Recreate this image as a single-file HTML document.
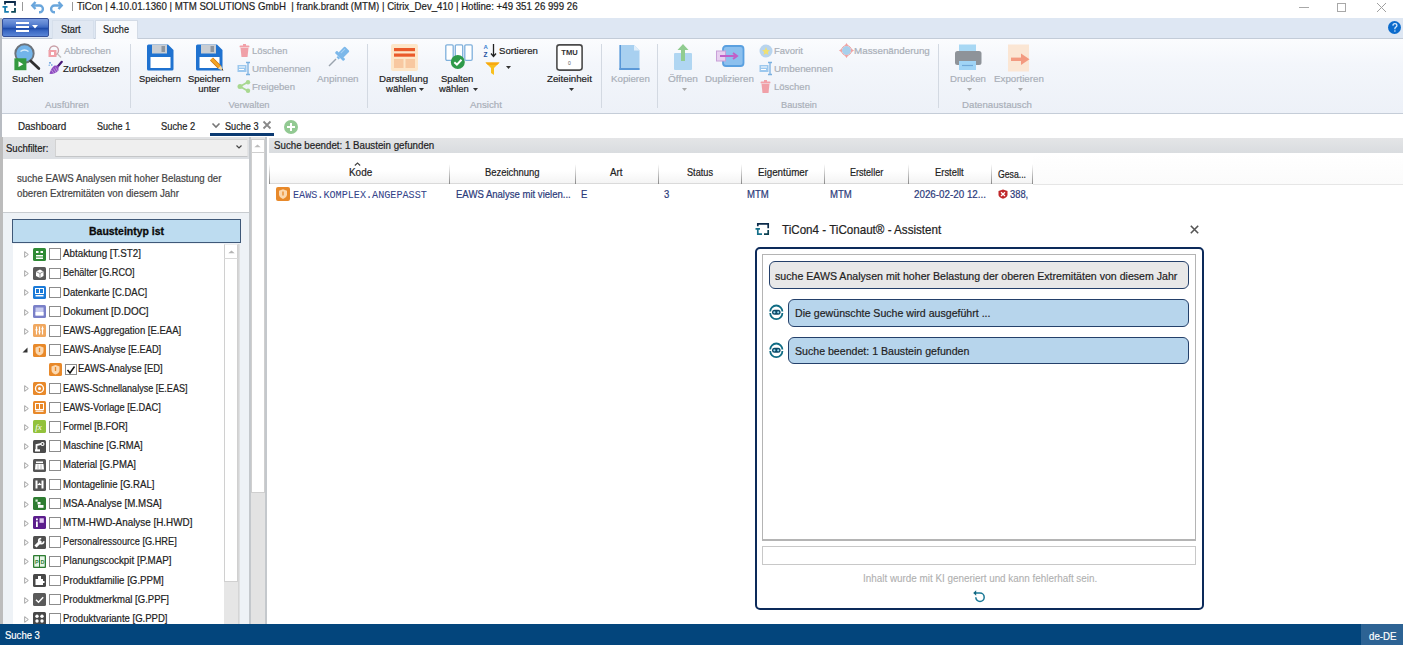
<!DOCTYPE html>
<html><head><meta charset="utf-8">
<style>
*{margin:0;padding:0;box-sizing:border-box}
html,body{width:1403px;height:645px;overflow:hidden;background:#fff;font-family:"Liberation Sans",sans-serif;color:#222;font-size:10px}
.a{position:absolute}
.t{position:absolute;white-space:nowrap;line-height:1}
svg{position:absolute;overflow:visible}
</style></head><body>

<!-- TITLE BAR -->
<div class="a" style="left:0;top:0;width:1403px;height:18px;background:#fff"></div>
<svg style="left:0px;top:0px" width="18" height="14" viewBox="0 0 18 14">
<path d="M5 4.5V2H15V5.8" fill="none" stroke="#0b2a4a" stroke-width="1.8"/>
<path d="M2.5 6.8H7.5M5.1 6V11.9H8.8" fill="none" stroke="#1a7eb0" stroke-width="1.8"/>
<path d="M11.2 11.9H15V8" fill="none" stroke="#0b4858" stroke-width="1.8"/>
</svg>
<div class="a" style="left:21.5px;top:1.5px;width:1.5px;height:9px;background:#999"></div>
<svg style="left:30px;top:0px" width="16" height="14" viewBox="0 0 16 14"><path d="M5.5 2L2.3 5.5L5.5 9" fill="none" stroke="#6aa6dc" stroke-width="2.4"/><path d="M2.8 5.5H9.5A3.4 3.4 0 0 1 9.5 12.3H9" fill="none" stroke="#6aa6dc" stroke-width="2.4"/></svg>
<svg style="left:48px;top:0px" width="16" height="14" viewBox="0 0 16 14"><path d="M10.5 2L13.7 5.5L10.5 9" fill="none" stroke="#6aa6dc" stroke-width="2.4"/><path d="M13.2 5.5H6.5A3.4 3.4 0 0 0 6.5 12.3H7" fill="none" stroke="#6aa6dc" stroke-width="2.4"/></svg>
<div class="a" style="left:71.7px;top:2px;width:1.3px;height:8.5px;background:#999"></div>
<div class="a" style="left:1299px;top:7px;width:10px;height:1px;background:#a8a8a8"></div>
<div class="a" style="left:1337px;top:3px;width:9px;height:9px;border:1px solid #a8a8a8"></div>
<svg style="left:1377px;top:3px" width="9" height="9" viewBox="0 0 9 9"><path d="M0 0L9 9M9 0L0 9" stroke="#a0a0a0" stroke-width="1"/></svg>

<!-- RIBBON TAB BAR -->
<div class="a" style="left:0;top:18px;width:1403px;height:21px;background:#dee7f3;border-bottom:1px solid #c3ccd8"></div>
<div class="a" style="left:2px;top:18px;width:47px;height:19px;background:linear-gradient(#7a9ce0,#5a82d0 30%,#3e6ac4 48%,#1d4aa8 55%,#3a68c4 70%,#5a86d6);border:1px solid #34509a;border-radius:2px"></div>
<div class="a" style="left:16px;top:22px;width:13px;height:2px;background:#fff"></div>
<div class="a" style="left:16px;top:26px;width:13px;height:2px;background:#fff"></div>
<div class="a" style="left:16px;top:30px;width:13px;height:2px;background:#fff"></div>
<svg style="left:32px;top:25px" width="6" height="4" viewBox="0 0 6 4"><path d="M0 0H6L3 3.5Z" fill="#fff"/></svg>
<div class="a" style="left:52px;top:19.5px;width:42px;height:19px;background:#e1e8f2;border:1px solid #d6dfeb;border-bottom:none"></div>
<div class="a" style="left:95px;top:19.5px;width:43px;height:20px;background:#f8fafd;border:1px solid #d3dbe6;border-bottom:none;border-radius:1px 1px 0 0"></div>
<div class="a" style="left:1388.2px;top:21.2px;width:13.2px;height:13px;border-radius:50%;background:#0b6bcc"></div>
<svg style="left:1388px;top:21px" width="14" height="13" viewBox="0 0 14 13"><path d="M4.9 4.6Q5 2.6 6.9 2.6Q8.9 2.6 8.9 4.4Q8.9 5.6 7.6 6.2Q6.9 6.6 6.9 7.8V8.2" fill="none" stroke="#d8ecff" stroke-width="1.3"/><circle cx="6.9" cy="10" r="0.8" fill="#d8ecff"/></svg>

<!-- RIBBON BODY -->
<div class="a" style="left:0;top:39px;width:1403px;height:75px;background:linear-gradient(#fbfcfe,#f3f6fb 35%,#edf1f8);border-bottom:1px solid #c5cdd8"></div>
<div class="a" style="left:0;top:18px;width:2px;height:96px;background:#b8bcc2"></div>

<div class="a" style="left:130px;top:44px;width:1px;height:64px;background:#d3d9e2"></div>
<div class="a" style="left:367px;top:44px;width:1px;height:64px;background:#d3d9e2"></div>
<div class="a" style="left:601px;top:44px;width:1px;height:64px;background:#d3d9e2"></div>
<div class="a" style="left:657px;top:44px;width:1px;height:64px;background:#d3d9e2"></div>
<div class="a" style="left:938px;top:44px;width:1px;height:64px;background:#d3d9e2"></div>
<div class="t" style="left:-233px;width:600px;text-align:center;top:100.12px;font-size:9.90px;color:#a9afb8;transform:scaleX(0.9750);transform-origin:50% 0;-webkit-text-stroke:0.2px #a9afb8;">Ausführen</div>
<div class="t" style="left:-50.599999999999994px;width:600px;text-align:center;top:100.12px;font-size:9.90px;color:#a9afb8;transform:scaleX(0.9476);transform-origin:50% 0;-webkit-text-stroke:0.2px #a9afb8;">Verwalten</div>
<div class="t" style="left:186px;width:600px;text-align:center;top:100.12px;font-size:9.90px;color:#a9afb8;transform:scaleX(0.9857);transform-origin:50% 0;-webkit-text-stroke:0.2px #a9afb8;">Ansicht</div>
<div class="t" style="left:499px;width:600px;text-align:center;top:100.12px;font-size:9.90px;color:#a9afb8;transform:scaleX(0.9344);transform-origin:50% 0;-webkit-text-stroke:0.2px #a9afb8;">Baustein</div>
<div class="t" style="left:697px;width:600px;text-align:center;top:100.12px;font-size:9.90px;color:#a9afb8;transform:scaleX(0.9784);transform-origin:50% 0;-webkit-text-stroke:0.2px #a9afb8;">Datenaustausch</div>
<svg style="left:13px;top:43px" width="28" height="28" viewBox="0 0 28 28">
<circle cx="11.5" cy="10.5" r="9.2" fill="#72b4ea" stroke="#6c737b" stroke-width="1.9"/>
<path d="M7.5 8.5Q11.5 5.5 15.5 8.5" fill="none" stroke="#d8ecfa" stroke-width="1.5"/>
<path d="M17.8 18L25.8 25.6" stroke="#2f2f2f" stroke-width="2.8" stroke-linecap="round"/>
<rect x="1.4" y="15.3" width="12" height="11.9" fill="#33993f"/>
<path d="M5.5 18.3L10.3 21.2L5.5 24.1Z" fill="#fff"/></svg>
<div class="t" style="left:11.7px;top:73.92px;font-size:9.90px;color:#1e1e1e;transform:scaleX(0.9352);transform-origin:0 0;-webkit-text-stroke:0.2px #1e1e1e;">Suchen</div>
<svg style="left:48px;top:45px" width="14" height="13" viewBox="0 0 14 13"><circle cx="6" cy="5.5" r="4.5" fill="none" stroke="#c9a0a8" stroke-width="1.4"/>
<rect x="0.5" y="5" width="8" height="7" fill="#f0a0a8"/><rect x="3" y="7" width="3" height="3" fill="#fff"/>
<path d="M9.5 9L13 12.5" stroke="#c0c0c0" stroke-width="1.4"/></svg>
<div class="t" style="left:63.6px;top:46.02px;font-size:9.90px;color:#a9afb8;transform:scaleX(0.9815);transform-origin:0 0;-webkit-text-stroke:0.2px #a9afb8;">Abbrechen</div>
<svg style="left:48px;top:61px" width="15" height="14" viewBox="0 0 15 14"><path d="M13.8 0.8L9.5 5.8" stroke="#4a1a78" stroke-width="2.2" stroke-linecap="round"/><path d="M10.5 4.8L6.5 4.5Q3 7 1.5 12.8Q6.5 13.5 10.5 9.5Z" fill="#8e4cc0"/><path d="M3.5 9L6 12.5M5.5 7.5L8 11.5M7.5 6.5L9.5 10" stroke="#c49ae0" stroke-width="0.9"/><circle cx="2" cy="1.8" r="0.9" fill="#4a90d8"/><circle cx="3.8" cy="4" r="0.8" fill="#4a90d8"/><circle cx="1.2" cy="4.2" r="0.6" fill="#4a90d8"/></svg>
<div class="t" style="left:63.2px;top:64.22px;font-size:9.90px;color:#1e1e1e;transform:scaleX(0.9558);transform-origin:0 0;-webkit-text-stroke:0.2px #1e1e1e;">Zurücksetzen</div>
<svg style="left:147px;top:44px" width="28" height="28" viewBox="0 0 28 28"><path d="M1.5 0.5H21L26.5 6V25A1.5 1.5 0 0 1 25 26.5H1.5A1.5 1.5 0 0 1 0 25V2A1.5 1.5 0 0 1 1.5 0.5Z" fill="#1f72d0"/>
<rect x="5" y="0.5" width="15" height="9" fill="#c8cdd3"/><rect x="14.5" y="2" width="3.5" height="6" fill="#8e959e"/>
<rect x="3.5" y="13" width="20" height="11" fill="#fff"/></svg>
<div class="t" style="left:139px;top:74.02px;font-size:9.90px;color:#1e1e1e;transform:scaleX(0.9421);transform-origin:0 0;-webkit-text-stroke:0.2px #1e1e1e;">Speichern</div>
<svg style="left:196px;top:44px" width="28" height="28" viewBox="0 0 28 28"><path d="M1.5 0.5H21L26.5 6V25A1.5 1.5 0 0 1 25 26.5H1.5A1.5 1.5 0 0 1 0 25V2A1.5 1.5 0 0 1 1.5 0.5Z" fill="#1f72d0"/>
<rect x="5" y="0.5" width="15" height="9" fill="#c8cdd3"/><rect x="14.5" y="2" width="3.5" height="6" fill="#8e959e"/>
<rect x="3.5" y="13" width="20" height="11" fill="#fff"/><path d="M15.5 15L23.5 23" stroke="#c87010" stroke-width="4.2" stroke-linecap="butt"/><path d="M15.5 15L23.5 23" stroke="#f5a524" stroke-width="3" stroke-linecap="butt"/><path d="M22 24.5L25 21.5L27.3 27Z" fill="#f8d8a0"/><path d="M25.5 25.5L27.3 27L26.6 24.6Z" fill="#333"/></svg>
<div class="t" style="left:187.5px;top:74.02px;font-size:9.90px;color:#1e1e1e;transform:scaleX(0.9534);transform-origin:0 0;-webkit-text-stroke:0.2px #1e1e1e;">Speichern</div>
<div class="t" style="left:-91.19999999999999px;width:600px;text-align:center;top:83.82px;font-size:9.90px;color:#1e1e1e;transform:scaleX(0.9528);transform-origin:50% 0;-webkit-text-stroke:0.2px #1e1e1e;">unter</div>
<svg style="left:239px;top:44px" width="12" height="14" viewBox="0 0 12 14"><rect x="0.5" y="1.5" width="10" height="2" rx="1" fill="#f2a0a8"/><rect x="4" y="0" width="3" height="2" fill="#f2a0a8"/><path d="M1.5 4H9.5L8.5 13H2.5Z" fill="#f0a0a8"/></svg>
<div class="t" style="left:251.6px;top:45.82px;font-size:9.90px;color:#a9afb8;transform:scaleX(0.9484);transform-origin:0 0;-webkit-text-stroke:0.2px #a9afb8;">Löschen</div>
<svg style="left:237px;top:62px" width="15" height="13" viewBox="0 0 15 13"><rect x="0.5" y="3" width="9" height="7" fill="#9cc8ee"/><path d="M2 5H8M2 7.5H7" stroke="#fff" stroke-width="1"/><path d="M11 0.5V12.5M9 0.5H13M9 12.5H13" stroke="#7ab0e0" stroke-width="1.3"/></svg>
<div class="t" style="left:251.9px;top:64.02px;font-size:9.90px;color:#a9afb8;transform:scaleX(0.9908);transform-origin:0 0;-webkit-text-stroke:0.2px #a9afb8;">Umbenennen</div>
<svg style="left:237px;top:80px" width="14" height="13" viewBox="0 0 14 13"><path d="M3 6.5L11 2M3 6.5L11 11" stroke="#a8d890" stroke-width="1.8"/><circle cx="3" cy="6.5" r="2.5" fill="#a8d890"/><circle cx="11" cy="2.2" r="2.2" fill="#a8d890"/><circle cx="11" cy="10.8" r="2.2" fill="#a8d890"/></svg>
<div class="t" style="left:251.9px;top:82.32px;font-size:9.90px;color:#a9afb8;transform:scaleX(0.9668);transform-origin:0 0;-webkit-text-stroke:0.2px #a9afb8;">Freigeben</div>
<svg style="left:328px;top:46px" width="22" height="21" viewBox="0 0 22 21"><path d="M1 20L8 13" stroke="#9aa3ad" stroke-width="1.4"/><g transform="rotate(45 13.5 8.5)"><rect x="10" y="0.5" width="7" height="9" rx="1" fill="#7cb8ea"/><rect x="7.5" y="9" width="12" height="3" rx="1" fill="#7cb8ea"/><rect x="12" y="12" width="3" height="2" fill="#7cb8ea"/><path d="M12 2V8" stroke="#a8d2f4" stroke-width="1"/></g></svg>
<div class="t" style="left:317.3px;top:74.02px;font-size:9.90px;color:#a9afb8;transform:scaleX(0.9967);transform-origin:0 0;-webkit-text-stroke:0.2px #a9afb8;">Anpinnen</div>
<svg style="left:391px;top:44px" width="27" height="27" viewBox="0 0 27 27"><rect x="0" y="0" width="27" height="27" rx="2" fill="#fde6c8"/><rect x="3" y="4" width="21" height="3.2" fill="#ea5a2a"/><rect x="3" y="9.5" width="21" height="3.2" fill="#ea5a2a"/><rect x="3" y="15" width="9.5" height="9" fill="#f8c8a0"/><rect x="14.5" y="15" width="9.5" height="9" fill="#f8c8a0"/></svg>
<div class="t" style="left:379px;top:73.92px;font-size:9.90px;color:#1e1e1e;transform:scaleX(0.9825);transform-origin:0 0;-webkit-text-stroke:0.2px #1e1e1e;">Darstellung</div>
<div class="t" style="left:385.8px;top:83.82px;font-size:9.90px;color:#1e1e1e;transform:scaleX(0.9690);transform-origin:0 0;-webkit-text-stroke:0.2px #1e1e1e;">wählen</div>
<svg style="left:419px;top:88px" width="5" height="3" viewBox="0 0 5 3"><path d="M0 0H5L2.5 3Z" fill="#333"/></svg>
<svg style="left:445px;top:44px" width="28" height="28" viewBox="0 0 28 28"><rect x="0.8" y="0.8" width="7.4" height="15.5" rx="1.2" fill="#fff" stroke="#7fb0dc" stroke-width="1.3"/><rect x="10.3" y="0.8" width="7.4" height="15.5" rx="1.2" fill="#fff" stroke="#7fb0dc" stroke-width="1.3"/><rect x="19.8" y="0.8" width="7.4" height="15.5" rx="1.2" fill="#fff" stroke="#7fb0dc" stroke-width="1.3"/><circle cx="12.8" cy="18" r="7" fill="#2e9a4a"/><path d="M9.3 18.2L11.9 20.6L16.5 15.8" fill="none" stroke="#fff" stroke-width="2"/></svg>
<div class="t" style="left:440.6px;top:73.92px;font-size:9.90px;color:#1e1e1e;transform:scaleX(0.9649);transform-origin:0 0;-webkit-text-stroke:0.2px #1e1e1e;">Spalten</div>
<div class="t" style="left:439.3px;top:83.82px;font-size:9.90px;color:#1e1e1e;transform:scaleX(0.9531);transform-origin:0 0;-webkit-text-stroke:0.2px #1e1e1e;">wählen</div>
<svg style="left:473px;top:88px" width="5" height="3" viewBox="0 0 5 3"><path d="M0 0H5L2.5 3Z" fill="#333"/></svg>
<svg style="left:483px;top:43px" width="15" height="15" viewBox="0 0 15 15"><text x="0.5" y="6" font-size="6" font-family="Liberation Sans" fill="#3a80d0" font-weight="bold">A</text><text x="0.5" y="13.5" font-size="6.5" font-family="Liberation Sans" fill="#1a50a0" font-weight="bold">Z</text><path d="M10.5 1V13M8 10.5L10.5 13.5L13 10.5" fill="none" stroke="#222" stroke-width="1.3"/></svg>
<div class="t" style="left:499px;top:46.02px;font-size:9.90px;color:#1e1e1e;transform:scaleX(0.9709);transform-origin:0 0;-webkit-text-stroke:0.2px #1e1e1e;">Sortieren</div>
<svg style="left:485px;top:62px" width="15" height="14" viewBox="0 0 15 14"><path d="M0.5 0.5H14.5L9 6V13L6 11V6Z" fill="#f8c020"/><path d="M0.5 0.5H14.5L12 3H3Z" fill="#f8a810"/></svg>
<svg style="left:506px;top:66px" width="5" height="3" viewBox="0 0 5 3"><path d="M0 0H5L2.5 3Z" fill="#333"/></svg>
<svg style="left:556px;top:44px" width="27" height="27" viewBox="0 0 27 27"><rect x="0.9" y="0.9" width="25.2" height="25.2" rx="2.5" fill="#fff" stroke="#4a4a4a" stroke-width="1.6"/><text x="13.5" y="10.8" text-anchor="middle" font-size="7.6" font-weight="bold" font-family="Liberation Sans" fill="#333">TMU</text><text x="13.5" y="20.5" text-anchor="middle" font-size="5" font-family="Liberation Sans" fill="#555">0</text></svg>
<div class="t" style="left:547px;top:74.02px;font-size:9.90px;color:#1e1e1e;transform:scaleX(0.9852);transform-origin:0 0;-webkit-text-stroke:0.2px #1e1e1e;">Zeiteinheit</div>
<svg style="left:569px;top:88px" width="5" height="3" viewBox="0 0 5 3"><path d="M0 0H5L2.5 3Z" fill="#333"/></svg>
<svg style="left:619px;top:44px" width="21" height="27" viewBox="0 0 21 27"><path d="M0.5 1H15L20.5 6.5V26H0.5Z" fill="#a8d0f0"/><path d="M15 1V6.5H20.5Z" fill="#e0eefa"/><rect x="0.5" y="24" width="20" height="2" fill="#5a98d8"/><rect x="0.5" y="1" width="1.5" height="25" fill="#5a98d8"/></svg>
<div class="t" style="left:611px;top:74.02px;font-size:9.90px;color:#a9afb8;transform:scaleX(0.9841);transform-origin:0 0;-webkit-text-stroke:0.2px #a9afb8;">Kopieren</div>
<svg style="left:673px;top:44px" width="20" height="27" viewBox="0 0 20 27"><rect x="1" y="9" width="18" height="17" rx="1" fill="#b0d6f2"/><path d="M10 0L15.5 6H12V17H8V6H4.5Z" fill="#90cc90"/></svg>
<div class="t" style="left:668px;top:74.02px;font-size:9.90px;color:#a9afb8;transform:scaleX(1.0156);transform-origin:0 0;-webkit-text-stroke:0.2px #a9afb8;">Öffnen</div>
<svg style="left:682px;top:88px" width="5" height="3" viewBox="0 0 5 3"><path d="M0 0H5L2.5 3Z" fill="#aaa"/></svg>
<svg style="left:716px;top:45px" width="29" height="23" viewBox="0 0 29 23"><rect x="7" y="1" width="20.5" height="20" rx="3" fill="#8cc0ee" stroke="#5aa0e0" stroke-width="1.8"/><rect x="0.5" y="6" width="9" height="10" fill="#e8d0f0" stroke="#c8a0d8"/><path d="M4 11H20M17 8L21 11L17 14" stroke="#c060c8" stroke-width="2" fill="none"/></svg>
<div class="t" style="left:705px;top:74.02px;font-size:9.90px;color:#a9afb8;transform:scaleX(0.9894);transform-origin:0 0;-webkit-text-stroke:0.2px #a9afb8;">Duplizieren</div>
<svg style="left:759px;top:44px" width="14" height="14" viewBox="0 0 14 14"><circle cx="7" cy="7" r="6.5" fill="#b8d4ee"/><path d="M7 3L8.2 6L11 6.3L8.8 8L9.5 11L7 9.5L4.5 11L5.2 8L3 6.3L5.8 6Z" fill="#f0e070"/></svg>
<div class="t" style="left:774px;top:46.02px;font-size:9.90px;color:#a9afb8;transform:scaleX(0.9585);transform-origin:0 0;-webkit-text-stroke:0.2px #a9afb8;">Favorit</div>
<svg style="left:759px;top:62px" width="15" height="13" viewBox="0 0 15 13"><rect x="0.5" y="3" width="9" height="7" fill="#9cc8ee"/><path d="M2 5H8M2 7.5H7" stroke="#fff" stroke-width="1"/><path d="M11 0.5V12.5M9 0.5H13M9 12.5H13" stroke="#7ab0e0" stroke-width="1.3"/></svg>
<div class="t" style="left:774px;top:64.02px;font-size:9.90px;color:#a9afb8;transform:scaleX(0.9925);transform-origin:0 0;-webkit-text-stroke:0.2px #a9afb8;">Umbenennen</div>
<svg style="left:760px;top:80px" width="12" height="14" viewBox="0 0 12 14"><rect x="0.5" y="1.5" width="10" height="2" rx="1" fill="#f2a0a8"/><rect x="4" y="0" width="3" height="2" fill="#f2a0a8"/><path d="M1.5 4H9.5L8.5 13H2.5Z" fill="#f0a0a8"/></svg>
<div class="t" style="left:774px;top:82.32px;font-size:9.90px;color:#a9afb8;transform:scaleX(0.9618);transform-origin:0 0;-webkit-text-stroke:0.2px #a9afb8;">Löschen</div>
<svg style="left:839px;top:43px" width="15" height="15" viewBox="0 0 15 15"><circle cx="7.5" cy="7.5" r="4.5" fill="#a8d0ec"/><path d="M7.5 0L9.5 3H5.5ZM7.5 15L9.5 12H5.5ZM0 7.5L3 5.5V9.5ZM15 7.5L12 5.5V9.5Z" fill="#f0a0a0"/><circle cx="7.5" cy="7.5" r="5" fill="none" stroke="#f0a8a8" stroke-width="1"/></svg>
<div class="t" style="left:854px;top:46.02px;font-size:9.90px;color:#a9afb8;transform:scaleX(0.9934);transform-origin:0 0;-webkit-text-stroke:0.2px #a9afb8;">Massenänderung</div>
<svg style="left:954px;top:44px" width="29" height="27" viewBox="0 0 29 27"><rect x="5" y="0.5" width="17" height="7" fill="#a8d8f4"/><rect x="1" y="7" width="26.5" height="14" rx="2.5" fill="#8e9399"/><rect x="5" y="17" width="17" height="9" fill="#a0d4f6"/><path d="M8 21.5H19" stroke="#70a8d8" stroke-width="1.2"/></svg>
<div class="t" style="left:950px;top:74.02px;font-size:9.90px;color:#a9afb8;transform:scaleX(0.9766);transform-origin:0 0;-webkit-text-stroke:0.2px #a9afb8;">Drucken</div>
<svg style="left:967px;top:88px" width="5" height="3" viewBox="0 0 5 3"><path d="M0 0H5L2.5 3Z" fill="#aaa"/></svg>
<svg style="left:1007px;top:44px" width="24" height="28" viewBox="0 0 24 28"><rect x="1" y="0.5" width="21" height="27" fill="#fbe6d4"/><path d="M4 15.3H15" stroke="#f39a80" stroke-width="3.4"/><path d="M14 9.5L22.5 15.3L14 21Z" fill="#f39a80"/></svg>
<div class="t" style="left:994px;top:74.02px;font-size:9.90px;color:#a9afb8;transform:scaleX(0.9876);transform-origin:0 0;-webkit-text-stroke:0.2px #a9afb8;">Exportieren</div>
<svg style="left:1018px;top:88px" width="5" height="3" viewBox="0 0 5 3"><path d="M0 0H5L2.5 3Z" fill="#aaa"/></svg>


<!-- DOC TABS -->
<div class="a" style="left:0;top:114px;width:1403px;height:23px;background:#fff"></div>
<div class="a" style="left:0;top:114px;width:2px;height:23px;background:#b8bcc2"></div>
<svg style="left:212px;top:123px" width="8" height="5" viewBox="0 0 8 5"><path d="M0.5 0.5L4 4L7.5 0.5" fill="none" stroke="#777" stroke-width="1.6"/></svg>
<svg style="left:263px;top:121px" width="8" height="8" viewBox="0 0 8 8"><path d="M0.5 0.5L7.5 7.5M7.5 0.5L0.5 7.5" stroke="#888" stroke-width="1.8"/></svg>
<div class="a" style="left:210px;top:133px;width:64px;height:3px;background:#0b3a72"></div>
<div class="a" style="left:284px;top:120px;width:14px;height:14px;border-radius:50%;background:#92c992"></div>
<div class="a" style="left:289.8px;top:122.8px;width:2.4px;height:8.4px;background:#fff"></div>
<div class="a" style="left:286.8px;top:125.8px;width:8.4px;height:2.4px;background:#fff"></div>

<!-- LEFT PANEL -->
<div class="a" style="left:0;top:137px;width:268px;height:487px;background:#eef2f6"></div>
<div class="a" style="left:0;top:137px;width:3px;height:487px;background:#bcbcbc"></div>
<div class="a" style="left:3px;top:137px;width:247px;height:22px;background:linear-gradient(#e0e1e3,#dde0e4)"></div>
<div class="a" style="left:55px;top:139px;width:193px;height:17.5px;background:#efefef;border:1px solid #d2d2d2;border-right-color:#e4e4e4;border-bottom-color:#c4c6c8"></div>
<svg style="left:236px;top:145px" width="6" height="4" viewBox="0 0 6 4"><path d="M0.5 0.5L3 3L5.5 0.5" fill="none" stroke="#444" stroke-width="1.2"/></svg>
<div class="a" style="left:3px;top:159px;width:246px;height:54px;background:#fff;border-bottom:1.5px solid #c8ccd0"></div>

<div class="a" style="left:12px;top:219px;width:229px;height:23.8px;background:#bddcf0;border:1.3px solid #3f5878"></div>
<div class="a" style="left:13px;top:243.5px;width:227px;height:381px;background:#fff"></div>
<div class="a" style="left:238px;top:243.5px;width:2px;height:381px;background:linear-gradient(90deg,#d0d0d0,#e4e6e8)"></div>
<!-- inner scrollbar -->
<div class="a" style="left:224px;top:243.5px;width:14px;height:381px;background:#e6e6e6"></div>
<div class="a" style="left:224.2px;top:244px;width:14px;height:338px;background:#fff;border:1px solid #d0d0d0;border-top-color:#eee"></div>
<svg style="left:228px;top:250px" width="7" height="4" viewBox="0 0 7 4"><path d="M0.3 3.3L3.5 0.6L6.7 3.3Z" fill="#b4b4b4"/></svg>
<div class="a" style="left:224px;top:258px;width:14px;height:1px;background:#d8d8d8"></div>

<svg style="left:23.5px;top:251.0px" width="5" height="7" viewBox="0 0 5 7"><path d="M0.7 0.7L4.3 3.5L0.7 6.3Z" fill="none" stroke="#999" stroke-width="0.9"/></svg>
<svg style="left:32.6px;top:247.6px" width="13" height="13" viewBox="0 0 13 13"><rect width="13" height="13" rx="1.5" fill="#2f8a35"/><rect x="3" y="3" width="2.5" height="2" fill="#fff"/><rect x="7.5" y="3" width="2.5" height="2" fill="#fff"/><rect x="3" y="7" width="7" height="1.5" fill="#fff"/><rect x="3" y="9.5" width="7" height="1.5" fill="#fff"/></svg>
<div class="a" style="left:49px;top:248.3px;width:11.5px;height:11.5px;background:#fff;border:1px solid #8c8c8c"></div>
<div class="t" style="left:62.8px;top:249.10px;font-size:10.40px;color:#222;transform:scaleX(0.9435);transform-origin:0 0;-webkit-text-stroke:0.2px #222;">Abtaktung [T.ST2]</div>
<svg style="left:23.5px;top:270.2px" width="5" height="7" viewBox="0 0 5 7"><path d="M0.7 0.7L4.3 3.5L0.7 6.3Z" fill="none" stroke="#999" stroke-width="0.9"/></svg>
<svg style="left:32.6px;top:266.8px" width="13" height="13" viewBox="0 0 13 13"><rect width="13" height="13" rx="1.5" fill="#5a5a5a"/><path d="M3 4.5L7 2.5L10.5 4.5V9L7 11L3 9Z" fill="#fff"/><path d="M3 4.5L7 6.5L10.5 4.5M7 6.5V11" stroke="#777" stroke-width="0.8" fill="none"/></svg>
<div class="a" style="left:49px;top:267.5px;width:11.5px;height:11.5px;background:#fff;border:1px solid #8c8c8c"></div>
<div class="t" style="left:62.8px;top:268.30px;font-size:10.40px;color:#222;transform:scaleX(0.8798);transform-origin:0 0;-webkit-text-stroke:0.2px #222;">Behälter [G.RCO]</div>
<svg style="left:23.5px;top:289.4px" width="5" height="7" viewBox="0 0 5 7"><path d="M0.7 0.7L4.3 3.5L0.7 6.3Z" fill="none" stroke="#999" stroke-width="0.9"/></svg>
<svg style="left:32.6px;top:286.0px" width="13" height="13" viewBox="0 0 13 13"><rect width="13" height="13" rx="1.5" fill="#1a7ad8"/><rect x="2.5" y="2.5" width="8" height="5" fill="none" stroke="#fff" stroke-width="1"/><path d="M6.5 2.5V7.5" stroke="#fff"/><rect x="2.5" y="9" width="8" height="1.5" fill="#fff"/></svg>
<div class="a" style="left:49px;top:286.7px;width:11.5px;height:11.5px;background:#fff;border:1px solid #8c8c8c"></div>
<div class="t" style="left:62.8px;top:287.50px;font-size:10.40px;color:#222;transform:scaleX(0.9173);transform-origin:0 0;-webkit-text-stroke:0.2px #222;">Datenkarte [C.DAC]</div>
<svg style="left:23.5px;top:308.6px" width="5" height="7" viewBox="0 0 5 7"><path d="M0.7 0.7L4.3 3.5L0.7 6.3Z" fill="none" stroke="#999" stroke-width="0.9"/></svg>
<svg style="left:32.6px;top:305.20000000000005px" width="13" height="13" viewBox="0 0 13 13"><rect width="13" height="13" rx="1.5" fill="#7a80c8"/><rect x="2.5" y="2.5" width="8" height="8" fill="#c8ccf0"/><rect x="2.5" y="7" width="8" height="3.5" fill="#fff"/></svg>
<div class="a" style="left:49px;top:305.90000000000003px;width:11.5px;height:11.5px;background:#fff;border:1px solid #8c8c8c"></div>
<div class="t" style="left:62.8px;top:306.70px;font-size:10.40px;color:#222;transform:scaleX(0.9567);transform-origin:0 0;-webkit-text-stroke:0.2px #222;">Dokument [D.DOC]</div>
<svg style="left:23.5px;top:327.8px" width="5" height="7" viewBox="0 0 5 7"><path d="M0.7 0.7L4.3 3.5L0.7 6.3Z" fill="none" stroke="#999" stroke-width="0.9"/></svg>
<svg style="left:32.6px;top:324.40000000000003px" width="13" height="13" viewBox="0 0 13 13"><rect width="13" height="13" rx="1.5" fill="#f0a860"/><path d="M3.5 2.5V10.5M6.5 2.5V10.5M9.5 2.5V10.5" stroke="#fff" stroke-width="1.2"/><rect x="2.5" y="5" width="2" height="1.5" fill="#fff"/><rect x="5.5" y="7" width="2" height="1.5" fill="#fff"/><rect x="8.5" y="4" width="2" height="1.5" fill="#fff"/></svg>
<div class="a" style="left:49px;top:325.1px;width:11.5px;height:11.5px;background:#fff;border:1px solid #8c8c8c"></div>
<div class="t" style="left:62.8px;top:325.90px;font-size:10.40px;color:#222;transform:scaleX(0.9164);transform-origin:0 0;-webkit-text-stroke:0.2px #222;">EAWS-Aggregation [E.EAA]</div>
<svg style="left:22px;top:347.0px" width="6" height="6" viewBox="0 0 6 6"><path d="M5.5 0.5V5.5H0.5Z" fill="#333"/></svg>
<svg style="left:32.6px;top:343.6px" width="13" height="13" viewBox="0 0 13 13"><rect width="13" height="13" rx="1.5" fill="#e8892a"/><path d="M6.5 2L10.5 3.5V7Q10.5 10 6.5 11.5Q2.5 10 2.5 7V3.5Z" fill="#fbd8b0"/><path d="M6.5 4V8" stroke="#e8892a" stroke-width="1.3"/></svg>
<div class="a" style="left:49px;top:344.3px;width:11.5px;height:11.5px;background:#fff;border:1px solid #8c8c8c"></div>
<div class="t" style="left:62.8px;top:345.10px;font-size:10.40px;color:#222;transform:scaleX(0.8880);transform-origin:0 0;-webkit-text-stroke:0.2px #222;">EAWS-Analyse [E.EAD]</div>
<svg style="left:48.6px;top:362.8px" width="13" height="13" viewBox="0 0 13 13"><rect width="13" height="13" rx="1.5" fill="#e8892a"/><path d="M6.5 2L10.5 3.5V7Q10.5 10 6.5 11.5Q2.5 10 2.5 7V3.5Z" fill="#fbd8b0"/><path d="M6.5 4V8" stroke="#e8892a" stroke-width="1.3"/></svg>
<div class="a" style="left:65px;top:363.5px;width:11.5px;height:11.5px;background:#fff;border:1px solid #8c8c8c"></div>
<svg style="left:66px;top:364.7px" width="10" height="10" viewBox="0 0 10 10"><path d="M1.5 5L4 8L8.5 1.5" fill="none" stroke="#111" stroke-width="1.5"/></svg>
<div class="t" style="left:78.39999999999999px;top:364.30px;font-size:10.40px;color:#222;transform:scaleX(0.9017);transform-origin:0 0;-webkit-text-stroke:0.2px #222;">EAWS-Analyse [ED]</div>
<svg style="left:23.5px;top:385.4px" width="5" height="7" viewBox="0 0 5 7"><path d="M0.7 0.7L4.3 3.5L0.7 6.3Z" fill="none" stroke="#999" stroke-width="0.9"/></svg>
<svg style="left:32.6px;top:382.0px" width="13" height="13" viewBox="0 0 13 13"><rect width="13" height="13" rx="1.5" fill="#e8892a"/><circle cx="6.5" cy="6.5" r="4" fill="none" stroke="#fff" stroke-width="1.3"/><circle cx="6.5" cy="6.5" r="1.5" fill="#fff"/></svg>
<div class="a" style="left:49px;top:382.7px;width:11.5px;height:11.5px;background:#fff;border:1px solid #8c8c8c"></div>
<div class="t" style="left:62.8px;top:383.50px;font-size:10.40px;color:#222;transform:scaleX(0.8715);transform-origin:0 0;-webkit-text-stroke:0.2px #222;">EAWS-Schnellanalyse [E.EAS]</div>
<svg style="left:23.5px;top:404.6px" width="5" height="7" viewBox="0 0 5 7"><path d="M0.7 0.7L4.3 3.5L0.7 6.3Z" fill="none" stroke="#999" stroke-width="0.9"/></svg>
<svg style="left:32.6px;top:401.20000000000005px" width="13" height="13" viewBox="0 0 13 13"><rect width="13" height="13" rx="1.5" fill="#e8892a"/><rect x="2.5" y="2.5" width="8" height="6" fill="none" stroke="#fff" stroke-width="1"/><path d="M6.5 2.5V8.5" stroke="#fff"/><rect x="2.5" y="9.5" width="8" height="1.3" fill="#fff"/></svg>
<div class="a" style="left:49px;top:401.90000000000003px;width:11.5px;height:11.5px;background:#fff;border:1px solid #8c8c8c"></div>
<div class="t" style="left:62.8px;top:402.70px;font-size:10.40px;color:#222;transform:scaleX(0.8946);transform-origin:0 0;-webkit-text-stroke:0.2px #222;">EAWS-Vorlage [E.DAC]</div>
<svg style="left:23.5px;top:423.8px" width="5" height="7" viewBox="0 0 5 7"><path d="M0.7 0.7L4.3 3.5L0.7 6.3Z" fill="none" stroke="#999" stroke-width="0.9"/></svg>
<svg style="left:32.6px;top:420.40000000000003px" width="13" height="13" viewBox="0 0 13 13"><rect width="13" height="13" rx="1.5" fill="#93c23c"/><text x="2.3" y="10.3" font-size="9" font-style="italic" font-family="Liberation Serif" fill="#fff">fx</text></svg>
<div class="a" style="left:49px;top:421.1px;width:11.5px;height:11.5px;background:#fff;border:1px solid #8c8c8c"></div>
<div class="t" style="left:62.8px;top:421.90px;font-size:10.40px;color:#222;transform:scaleX(0.8887);transform-origin:0 0;-webkit-text-stroke:0.2px #222;">Formel [B.FOR]</div>
<svg style="left:23.5px;top:443.0px" width="5" height="7" viewBox="0 0 5 7"><path d="M0.7 0.7L4.3 3.5L0.7 6.3Z" fill="none" stroke="#999" stroke-width="0.9"/></svg>
<svg style="left:32.6px;top:439.6px" width="13" height="13" viewBox="0 0 13 13"><rect width="13" height="13" rx="1.5" fill="#4c4c4c"/><path d="M3.5 10V5L8.5 3.8" stroke="#fff" stroke-width="1.8" fill="none"/><rect x="2" y="9.3" width="5" height="2.2" fill="#fff"/><circle cx="9.5" cy="4" r="2" fill="#fff"/><circle cx="9.5" cy="4" r="0.9" fill="#4c4c4c"/></svg>
<div class="a" style="left:49px;top:440.3px;width:11.5px;height:11.5px;background:#fff;border:1px solid #8c8c8c"></div>
<div class="t" style="left:62.8px;top:441.10px;font-size:10.40px;color:#222;transform:scaleX(0.9133);transform-origin:0 0;-webkit-text-stroke:0.2px #222;">Maschine [G.RMA]</div>
<svg style="left:23.5px;top:462.2px" width="5" height="7" viewBox="0 0 5 7"><path d="M0.7 0.7L4.3 3.5L0.7 6.3Z" fill="none" stroke="#999" stroke-width="0.9"/></svg>
<svg style="left:32.6px;top:458.8px" width="13" height="13" viewBox="0 0 13 13"><rect width="13" height="13" rx="1.5" fill="#555"/><rect x="3" y="2.5" width="7" height="1.6" fill="#fff"/><path d="M2.5 5H10.5L11 10.5H2Z" fill="#fff"/><path d="M5 5.5V10M8 5.5V10" stroke="#aaa" stroke-width="0.8"/></svg>
<div class="a" style="left:49px;top:459.5px;width:11.5px;height:11.5px;background:#fff;border:1px solid #8c8c8c"></div>
<div class="t" style="left:62.8px;top:460.30px;font-size:10.40px;color:#222;transform:scaleX(0.9233);transform-origin:0 0;-webkit-text-stroke:0.2px #222;">Material [G.PMA]</div>
<svg style="left:23.5px;top:481.4px" width="5" height="7" viewBox="0 0 5 7"><path d="M0.7 0.7L4.3 3.5L0.7 6.3Z" fill="none" stroke="#999" stroke-width="0.9"/></svg>
<svg style="left:32.6px;top:478.0px" width="13" height="13" viewBox="0 0 13 13"><rect width="13" height="13" rx="1.5" fill="#555"/><rect x="2.5" y="2.5" width="2" height="8" fill="#fff"/><rect x="8.5" y="2.5" width="2" height="8" fill="#fff"/><path d="M4.5 6.5H8.5" stroke="#fff" stroke-width="1.2"/><path d="M6.5 4.5L5.2 6.5H7.8Z" fill="#fff"/></svg>
<div class="a" style="left:49px;top:478.7px;width:11.5px;height:11.5px;background:#fff;border:1px solid #8c8c8c"></div>
<div class="t" style="left:62.8px;top:479.50px;font-size:10.40px;color:#222;transform:scaleX(0.9256);transform-origin:0 0;-webkit-text-stroke:0.2px #222;">Montagelinie [G.RAL]</div>
<svg style="left:23.5px;top:500.6px" width="5" height="7" viewBox="0 0 5 7"><path d="M0.7 0.7L4.3 3.5L0.7 6.3Z" fill="none" stroke="#999" stroke-width="0.9"/></svg>
<svg style="left:32.6px;top:497.20000000000005px" width="13" height="13" viewBox="0 0 13 13"><rect width="13" height="13" rx="1.5" fill="#2e7d32"/><rect x="2.5" y="2.5" width="2.2" height="2.2" fill="#d8f0d8"/><rect x="4.5" y="5" width="3" height="2.5" fill="#fff"/><rect x="5" y="8" width="5.5" height="2.8" fill="#fff"/></svg>
<div class="a" style="left:49px;top:497.90000000000003px;width:11.5px;height:11.5px;background:#fff;border:1px solid #8c8c8c"></div>
<div class="t" style="left:62.8px;top:498.70px;font-size:10.40px;color:#222;transform:scaleX(0.9352);transform-origin:0 0;-webkit-text-stroke:0.2px #222;">MSA-Analyse [M.MSA]</div>
<svg style="left:23.5px;top:519.8px" width="5" height="7" viewBox="0 0 5 7"><path d="M0.7 0.7L4.3 3.5L0.7 6.3Z" fill="none" stroke="#999" stroke-width="0.9"/></svg>
<svg style="left:32.6px;top:516.4px" width="13" height="13" viewBox="0 0 13 13"><rect width="13" height="13" rx="1.5" fill="#5b1d8c"/><rect x="3" y="2.5" width="1.8" height="1.8" fill="#fff"/><rect x="3" y="5.5" width="1.8" height="5.5" fill="#fff"/><rect x="6.5" y="2.3" width="4.3" height="4.5" fill="#e0c8f0"/></svg>
<div class="a" style="left:49px;top:517.0999999999999px;width:11.5px;height:11.5px;background:#fff;border:1px solid #8c8c8c"></div>
<div class="t" style="left:62.8px;top:517.90px;font-size:10.40px;color:#222;transform:scaleX(0.9498);transform-origin:0 0;-webkit-text-stroke:0.2px #222;">MTM-HWD-Analyse [H.HWD]</div>
<svg style="left:23.5px;top:539.0px" width="5" height="7" viewBox="0 0 5 7"><path d="M0.7 0.7L4.3 3.5L0.7 6.3Z" fill="none" stroke="#999" stroke-width="0.9"/></svg>
<svg style="left:32.6px;top:535.6px" width="13" height="13" viewBox="0 0 13 13"><rect width="13" height="13" rx="1.5" fill="#505050"/><path d="M2.5 10.5L8 5" stroke="#fff" stroke-width="3"/><path d="M8.2 2.5A2.6 2.6 0 1 0 10.8 5.2" fill="none" stroke="#fff" stroke-width="1.5"/></svg>
<div class="a" style="left:49px;top:536.3px;width:11.5px;height:11.5px;background:#fff;border:1px solid #8c8c8c"></div>
<div class="t" style="left:62.8px;top:537.10px;font-size:10.40px;color:#222;transform:scaleX(0.8869);transform-origin:0 0;-webkit-text-stroke:0.2px #222;">Personalressource [G.HRE]</div>
<svg style="left:23.5px;top:558.2px" width="5" height="7" viewBox="0 0 5 7"><path d="M0.7 0.7L4.3 3.5L0.7 6.3Z" fill="none" stroke="#999" stroke-width="0.9"/></svg>
<svg style="left:32.6px;top:554.8000000000001px" width="13" height="13" viewBox="0 0 13 13"><rect width="13" height="13" rx="1" fill="#2e7d32"/><rect x="1.3" y="1.3" width="4.7" height="10.4" fill="#e8f6e8"/><rect x="7" y="1.3" width="4.7" height="10.4" fill="#e8f6e8"/><text x="2" y="8.5" font-size="5.5" font-family="Liberation Sans" font-weight="bold" fill="#2e7d32">P</text><text x="7.6" y="8.5" font-size="5.5" font-family="Liberation Sans" font-weight="bold" fill="#2e7d32">D</text></svg>
<div class="a" style="left:49px;top:555.5px;width:11.5px;height:11.5px;background:#fff;border:1px solid #8c8c8c"></div>
<div class="t" style="left:62.8px;top:556.30px;font-size:10.40px;color:#222;transform:scaleX(0.9409);transform-origin:0 0;-webkit-text-stroke:0.2px #222;">Planungscockpit [P.MAP]</div>
<svg style="left:23.5px;top:577.4px" width="5" height="7" viewBox="0 0 5 7"><path d="M0.7 0.7L4.3 3.5L0.7 6.3Z" fill="none" stroke="#999" stroke-width="0.9"/></svg>
<svg style="left:32.6px;top:574.0px" width="13" height="13" viewBox="0 0 13 13"><rect width="13" height="13" rx="1.5" fill="#484848"/><rect x="5" y="2" width="3" height="3" fill="#fff"/><rect x="2.5" y="5" width="7.5" height="6" fill="#fff"/><rect x="10" y="7" width="1.5" height="2" fill="#fff"/></svg>
<div class="a" style="left:49px;top:574.6999999999999px;width:11.5px;height:11.5px;background:#fff;border:1px solid #8c8c8c"></div>
<div class="t" style="left:62.8px;top:575.50px;font-size:10.40px;color:#222;transform:scaleX(0.9336);transform-origin:0 0;-webkit-text-stroke:0.2px #222;">Produktfamilie [G.PPM]</div>
<svg style="left:23.5px;top:596.6px" width="5" height="7" viewBox="0 0 5 7"><path d="M0.7 0.7L4.3 3.5L0.7 6.3Z" fill="none" stroke="#999" stroke-width="0.9"/></svg>
<svg style="left:32.6px;top:593.2px" width="13" height="13" viewBox="0 0 13 13"><rect width="13" height="13" rx="1.5" fill="#5a5a5a"/><path d="M3 6.8L5.5 9.2L10.2 4.3" stroke="#fff" stroke-width="1.5" fill="none"/></svg>
<div class="a" style="left:49px;top:593.9px;width:11.5px;height:11.5px;background:#fff;border:1px solid #8c8c8c"></div>
<div class="t" style="left:62.8px;top:594.70px;font-size:10.40px;color:#222;transform:scaleX(0.9179);transform-origin:0 0;-webkit-text-stroke:0.2px #222;">Produktmerkmal [G.PPF]</div>
<svg style="left:23.5px;top:615.8px" width="5" height="7" viewBox="0 0 5 7"><path d="M0.7 0.7L4.3 3.5L0.7 6.3Z" fill="none" stroke="#999" stroke-width="0.9"/></svg>
<svg style="left:32.6px;top:612.4px" width="13" height="13" viewBox="0 0 13 13"><rect width="13" height="13" rx="1.5" fill="#484848"/><circle cx="4" cy="4.2" r="1.7" fill="#fff"/><circle cx="9" cy="4.2" r="1.7" fill="#fff"/><circle cx="4" cy="9" r="1.7" fill="#fff"/><circle cx="9" cy="9" r="1.7" fill="#fff"/></svg>
<div class="a" style="left:49px;top:613.0999999999999px;width:11.5px;height:11.5px;background:#fff;border:1px solid #8c8c8c"></div>
<div class="t" style="left:62.8px;top:613.90px;font-size:10.40px;color:#222;transform:scaleX(0.9186);transform-origin:0 0;-webkit-text-stroke:0.2px #222;">Produktvariante [G.PPD]</div>


<!-- outer scrollbar -->
<div class="a" style="left:249px;top:137px;width:2px;height:487px;background:#c4c8cc"></div>
<div class="a" style="left:250.5px;top:137px;width:15px;height:487px;background:#e3e3e3"></div>
<div class="a" style="left:250.5px;top:138.5px;width:14px;height:354px;background:#fff;border:1px solid #cfcfcf"></div>
<div class="a" style="left:250.5px;top:152px;width:14px;height:1.2px;background:#cfcfcf"></div>
<svg style="left:254.3px;top:144px" width="7" height="4" viewBox="0 0 7 4"><path d="M0.3 3.3L3.5 0.6L6.7 3.3Z" fill="#bcbcbc"/></svg>
<div class="a" style="left:264.5px;top:137px;width:2px;height:487px;background:#c4c8cc"></div>

<!-- RIGHT CONTENT -->
<div class="a" style="left:267px;top:137px;width:1136px;height:487px;background:#fff"></div>
<div class="a" style="left:269px;top:138px;width:1134px;height:15px;background:linear-gradient(#e4e5e7,#d9dcdf)"></div>
<div class="a" style="left:269px;top:153px;width:1134px;height:31px;background:linear-gradient(#fff,#fff 60%,#f4f4f4);border-bottom:1px solid #dadada"></div>

<div class="a" style="left:1033px;top:154px;width:370px;height:31px;background:linear-gradient(#fff,#fbfbfb);border-bottom:1px solid #e6e6e6"></div>
<div class="a" style="left:269.0px;top:164px;width:1px;height:20px;background:linear-gradient(rgba(150,150,150,0),#8a8a8a)"></div>
<div class="a" style="left:449.0px;top:164px;width:1px;height:20px;background:linear-gradient(rgba(150,150,150,0),#8a8a8a)"></div>
<div class="a" style="left:574.5px;top:164px;width:1px;height:20px;background:linear-gradient(rgba(150,150,150,0),#8a8a8a)"></div>
<div class="a" style="left:657.5px;top:164px;width:1px;height:20px;background:linear-gradient(rgba(150,150,150,0),#8a8a8a)"></div>
<div class="a" style="left:741.0px;top:164px;width:1px;height:20px;background:linear-gradient(rgba(150,150,150,0),#8a8a8a)"></div>
<div class="a" style="left:823.5px;top:164px;width:1px;height:20px;background:linear-gradient(rgba(150,150,150,0),#8a8a8a)"></div>
<div class="a" style="left:907.5px;top:164px;width:1px;height:20px;background:linear-gradient(rgba(150,150,150,0),#8a8a8a)"></div>
<div class="a" style="left:990.5px;top:164px;width:1px;height:20px;background:linear-gradient(rgba(150,150,150,0),#8a8a8a)"></div>
<div class="a" style="left:1032.0px;top:164px;width:1px;height:20px;background:linear-gradient(rgba(150,150,150,0),#8a8a8a)"></div>
<div class="t" style="left:348.8px;top:167.88px;font-size:10.30px;color:#222;transform:scaleX(0.9644);transform-origin:0 0;-webkit-text-stroke:0.2px #222;">Kode</div>
<div class="t" style="left:484.9px;top:167.88px;font-size:10.30px;color:#222;transform:scaleX(0.9168);transform-origin:0 0;-webkit-text-stroke:0.2px #222;">Bezeichnung</div>
<div class="t" style="left:610.2px;top:167.88px;font-size:10.30px;color:#222;transform:scaleX(0.9497);transform-origin:0 0;-webkit-text-stroke:0.2px #222;">Art</div>
<div class="t" style="left:686.6px;top:167.88px;font-size:10.30px;color:#222;transform:scaleX(0.8904);transform-origin:0 0;-webkit-text-stroke:0.2px #222;">Status</div>
<div class="t" style="left:758px;top:167.88px;font-size:10.30px;color:#222;transform:scaleX(0.9493);transform-origin:0 0;-webkit-text-stroke:0.2px #222;">Eigentümer</div>
<div class="t" style="left:849.8px;top:167.88px;font-size:10.30px;color:#222;transform:scaleX(0.8789);transform-origin:0 0;-webkit-text-stroke:0.2px #222;">Ersteller</div>
<div class="t" style="left:935px;top:167.88px;font-size:10.30px;color:#222;transform:scaleX(0.9117);transform-origin:0 0;-webkit-text-stroke:0.2px #222;">Erstellt</div>
<div class="t" style="left:997.9px;top:170.38px;font-size:10.30px;color:#222;transform:scaleX(0.8433);transform-origin:0 0;-webkit-text-stroke:0.2px #222;">Gesa...</div>
<svg style="left:354px;top:161.5px" width="7" height="4" viewBox="0 0 7 4"><path d="M0.8 3.5L3.5 1L6.2 3.5" fill="none" stroke="#444" stroke-width="1.1"/></svg>
<svg style="left:276px;top:187px" width="14" height="14" viewBox="0 0 14 14"><rect width="14" height="14" rx="2" fill="#e8892a"/><path d="M7 2.2L11 3.7V7.3Q11 10.4 7 12Q3 10.4 3 7.3V3.7Z" fill="#fbd8b0"/><path d="M7 4.5V8.5" stroke="#e8892a" stroke-width="1.3"/></svg>
<div class="t" style="left:293px;top:190.12px;font-size:11.06px;color:#34448a;transform:scaleX(0.9174);transform-origin:0 0;-webkit-text-stroke:0.05px #34448a;font-family:'Liberation Mono',monospace">EAWS.KOMPLEX.ANGEPASST</div>
<div class="t" style="left:455.6px;top:189.88px;font-size:10.30px;color:#2b3a7a;transform:scaleX(0.9270);transform-origin:0 0;-webkit-text-stroke:0.2px #2b3a7a;">EAWS Analyse mit vielen...</div>
<div class="t" style="left:581px;top:189.83px;font-size:10.36px;color:#2b3a7a;transform:scaleX(0.9174);transform-origin:0 0;-webkit-text-stroke:0.2px #2b3a7a;">E</div>
<div class="t" style="left:664px;top:189.83px;font-size:10.36px;color:#2b3a7a;transform:scaleX(0.9174);transform-origin:0 0;-webkit-text-stroke:0.2px #2b3a7a;">3</div>
<div class="t" style="left:747.2px;top:189.88px;font-size:10.30px;color:#2b3a7a;transform:scaleX(0.9296);transform-origin:0 0;-webkit-text-stroke:0.2px #2b3a7a;">MTM</div>
<div class="t" style="left:830.3px;top:189.88px;font-size:10.30px;color:#2b3a7a;transform:scaleX(0.9296);transform-origin:0 0;-webkit-text-stroke:0.2px #2b3a7a;">MTM</div>
<div class="t" style="left:913.7px;top:189.88px;font-size:10.30px;color:#2b3a7a;transform:scaleX(0.9525);transform-origin:0 0;-webkit-text-stroke:0.2px #2b3a7a;">2026-02-20 12...</div>
<svg style="left:998px;top:189px" width="10" height="10" viewBox="0 0 10 10"><path d="M5 0.5L9.5 2V5.5Q9.5 8.5 5 9.8Q0.5 8.5 0.5 5.5V2Z" fill="#c0282a"/><path d="M3 3.2L7 7M7 3.2L3 7" stroke="#fff" stroke-width="1.3"/></svg>
<div class="t" style="left:1009.8px;top:189.88px;font-size:10.30px;color:#2b3a7a;transform:scaleX(0.9079);transform-origin:0 0;-webkit-text-stroke:0.2px #2b3a7a;">388,</div>


<!-- DIALOG -->
<svg style="left:750px;top:218px" width="22" height="20" viewBox="0 0 22 20"><path d="M7.8 8.3V5.8H18.2V10.3" fill="none" stroke="#0b2a4a" stroke-width="1.7"/><path d="M5.5 10.9H10M7.8 10.1V16.1H12" fill="none" stroke="#17708a" stroke-width="1.7"/><path d="M14 16.1H18.2V12" fill="none" stroke="#0b4050" stroke-width="1.7"/></svg>
<div class="t" style="left:782.3px;top:224.27px;font-size:12.20px;color:#222;transform:scaleX(0.9533);transform-origin:0 0;-webkit-text-stroke:0.2px #222;">TiCon4 - TiConaut® - Assistent</div>
<svg style="left:1190px;top:225px" width="9" height="9" viewBox="0 0 9 9"><path d="M0.8 0.8L8.2 8.2M8.2 0.8L0.8 8.2" stroke="#555" stroke-width="1.6"/></svg>
<div class="a" style="left:755.2px;top:247px;width:448.4px;height:363.2px;border:2.3px solid #0c2a5a;border-radius:5px;background:#fff"></div>
<div class="a" style="left:762px;top:254px;width:434px;height:287px;border:1.5px solid #b4b4b4;border-bottom-width:2px;background:#fff"></div>
<div class="a" style="left:769px;top:261px;width:420px;height:28px;background:#e8e8e8;border:1.8px solid #24406a;border-radius:6px"></div>
<div class="t" style="left:775px;top:270.52px;font-size:11.55px;color:#222;transform:scaleX(0.9174);transform-origin:0 0;-webkit-text-stroke:0.2px #222;">suche EAWS Analysen mit hoher Belastung der oberen Extremitäten von diesem Jahr</div>
<svg style="left:769px;top:305.4px" width="15" height="15" viewBox="0 0 15 15"><path d="M1.2 6.6A6.1 6.1 0 0 1 13.4 6.6M13.4 8A6.1 6.1 0 0 1 1.2 8" fill="none" stroke="#0f6c84" stroke-width="1.8"/><rect x="3" y="4.8" width="8.6" height="5" rx="2.5" fill="#0b4a68"/><circle cx="5.4" cy="7.3" r="1.1" fill="#9fdcf0"/><circle cx="9.2" cy="7.3" r="1.1" fill="#9fdcf0"/></svg>
<div class="a" style="left:788px;top:299px;width:401px;height:27.5px;background:#b7d5ec;border:1.8px solid #24406a;border-radius:6px"></div>
<div class="t" style="left:795px;top:308.32px;font-size:11.55px;color:#222;transform:scaleX(0.9174);transform-origin:0 0;-webkit-text-stroke:0.2px #222;">Die gewünschte Suche wird ausgeführt ...</div>
<svg style="left:769px;top:342.9px" width="15" height="15" viewBox="0 0 15 15"><path d="M1.2 6.6A6.1 6.1 0 0 1 13.4 6.6M13.4 8A6.1 6.1 0 0 1 1.2 8" fill="none" stroke="#0f6c84" stroke-width="1.8"/><rect x="3" y="4.8" width="8.6" height="5" rx="2.5" fill="#0b4a68"/><circle cx="5.4" cy="7.3" r="1.1" fill="#9fdcf0"/><circle cx="9.2" cy="7.3" r="1.1" fill="#9fdcf0"/></svg>
<div class="a" style="left:788px;top:336.5px;width:401px;height:27.5px;background:#b7d5ec;border:1.8px solid #24406a;border-radius:6px"></div>
<div class="t" style="left:795px;top:345.82px;font-size:11.55px;color:#222;transform:scaleX(0.9174);transform-origin:0 0;-webkit-text-stroke:0.2px #222;">Suche beendet: 1 Baustein gefunden</div>
<div class="a" style="left:762px;top:546px;width:434px;height:19px;border:1.2px solid #c8c8c8;background:#fff"></div>
<div class="t" style="left:862.8px;top:573.67px;font-size:10.20px;color:#b0b0b0;transform:scaleX(0.9686);transform-origin:0 0;-webkit-text-stroke:0.1px #b0b0b0;">Inhalt wurde mit KI generiert und kann fehlerhaft sein.</div>
<svg style="left:968px;top:586px" width="22" height="20" viewBox="0 0 22 20"><path d="M7 7H12A4.2 4.2 0 1 1 7.8 11.2" fill="none" stroke="#1a7896" stroke-width="1.5"/><path d="M5.2 7L8.2 4.3V9.7Z" fill="#0f6680"/></svg>


<!-- STATUS BAR -->
<div class="a" style="left:0;top:624px;width:1403px;height:21px;background:#03457c"></div>
<div class="a" style="left:1360.6px;top:624.4px;width:42.4px;height:20.6px;background:#2d6394"></div>

<div class="t" style="left:77.3px;top:2.00px;font-size:10.40px;color:#1e1e1e;transform:scaleX(0.9308);transform-origin:0 0;-webkit-text-stroke:0.2px #1e1e1e;">TiCon | 4.10.01.1360 | MTM SOLUTIONS GmbH &nbsp;| frank.brandt (MTM) | Citrix_Dev_410 | Hotline: +49 351 26 999 26</div>
<div class="t" style="left:61px;top:25.47px;font-size:10.20px;color:#1e1e1e;transform:scaleX(0.9099);transform-origin:0 0;-webkit-text-stroke:0.2px #1e1e1e;">Start</div>
<div class="t" style="left:102.8px;top:25.47px;font-size:10.20px;color:#1e1e1e;transform:scaleX(0.8990);transform-origin:0 0;-webkit-text-stroke:0.2px #1e1e1e;">Suche</div>
<div class="t" style="left:17.8px;top:121.68px;font-size:10.30px;color:#1e1e1e;transform:scaleX(0.9566);transform-origin:0 0;-webkit-text-stroke:0.2px #1e1e1e;">Dashboard</div>
<div class="t" style="left:96.8px;top:121.68px;font-size:10.30px;color:#1e1e1e;transform:scaleX(0.8784);transform-origin:0 0;-webkit-text-stroke:0.2px #1e1e1e;">Suche 1</div>
<div class="t" style="left:160.8px;top:121.68px;font-size:10.30px;color:#1e1e1e;transform:scaleX(0.9049);transform-origin:0 0;-webkit-text-stroke:0.2px #1e1e1e;">Suche 2</div>
<div class="t" style="left:225.3px;top:121.68px;font-size:10.30px;color:#1e1e1e;transform:scaleX(0.8890);transform-origin:0 0;-webkit-text-stroke:0.2px #1e1e1e;">Suche 3</div>
<div class="t" style="left:5.6px;top:144.08px;font-size:10.30px;color:#1a1a1a;transform:scaleX(0.9258);transform-origin:0 0;-webkit-text-stroke:0.2px #1a1a1a;">Suchfilter:</div>
<div class="t" style="left:17px;top:174.38px;font-size:10.30px;color:#444;transform:scaleX(0.9416);transform-origin:0 0;-webkit-text-stroke:0.2px #444;">suche EAWS Analysen mit hoher Belastung der</div>
<div class="t" style="left:17px;top:188.58px;font-size:10.30px;color:#444;transform:scaleX(0.9464);transform-origin:0 0;-webkit-text-stroke:0.2px #444;">oberen Extremitäten von diesem Jahr</div>
<div class="t" style="left:88.5px;top:225.89px;font-size:11.00px;color:#0a0a0a;transform:scaleX(0.9512);transform-origin:0 0;-webkit-text-stroke:0.3px #0a0a0a;font-weight:bold;">Bausteintyp ist</div>
<div class="t" style="left:274.3px;top:141.18px;font-size:10.30px;color:#1e1e1e;transform:scaleX(0.9456);transform-origin:0 0;-webkit-text-stroke:0.2px #1e1e1e;">Suche beendet: 1 Baustein gefunden</div>
<div class="t" style="left:5px;top:631.43px;font-size:10.36px;color:#fff;transform:scaleX(0.9174);transform-origin:0 0;-webkit-text-stroke:0.2px #fff;">Suche 3</div>
<div class="t" style="left:1368.6px;top:631.15px;font-size:10.57px;color:#fff;transform:scaleX(0.9174);transform-origin:0 0;-webkit-text-stroke:0.2px #fff;">de-DE</div>

</body></html>
